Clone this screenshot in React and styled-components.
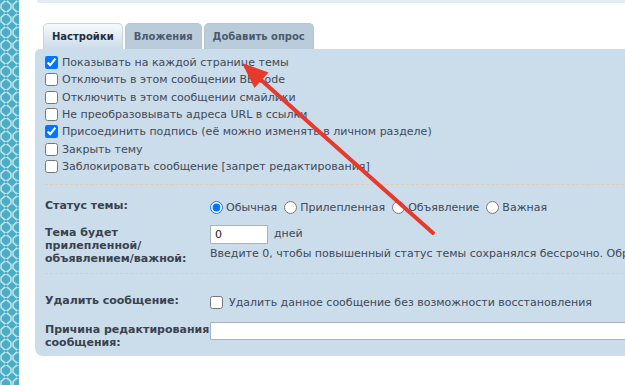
import React from "react";
import styled, { createGlobalStyle } from "styled-components";

const GlobalStyle = createGlobalStyle`
  html, body {
    margin: 0;
    padding: 0;
    background: #fff;
    overflow: hidden;
  }
  body {
    font-family: "DejaVu Sans", Verdana, sans-serif;
    font-size: 11px;
    color: #404a58;
  }
`;

const options = [
  { text: "Показывать на каждой странице темы", checked: true },
  { text: "Отключить в этом сообщении BB-code" },
  { text: "Отключить в этом сообщении смайлики" },
  { text: "Не преобразовывать адреса URL в ссылки" },
  { text: "Присоединить подпись (её можно изменять в личном разделе)", checked: true },
  { text: "Закрыть тему" },
  { text: "Заблокировать сообщение [запрет редактирования]" },
];

const statuses = ["Обычная", "Прилепленная", "Объявление", "Важная"];

const App = () => {
  return (
    <>
      <GlobalStyle />
      <Page>
        <Strip />
        <Main>
          <TopStub />
          <Tabs>
            <Tab active>Настройки</Tab>
            <Tab>Вложения</Tab>
            <Tab>Добавить опрос</Tab>
          </Tabs>
          <Panel>
            <CheckList>
              {options.map((o) => (
                <CheckRow key={o.text}>
                  <Check type="checkbox" defaultChecked={o.checked} />
                  <span>{o.text}</span>
                </CheckRow>
              ))}
            </CheckList>
            <Separator />
            <FormRow>
              <Label>Статус темы:</Label>
              <Controls>
                {statuses.map((s, i) => (
                  <RadioItem key={s}>
                    <Radio type="radio" name="status" defaultChecked={i === 0} />
                    {s}
                  </RadioItem>
                ))}
              </Controls>
            </FormRow>
            <FormRow gap={8}>
              <Label>
                Тема будет
                <br />
                прилепленной/
                <br />
                объявлением/важной:
              </Label>
              <Stack>
                <Controls>
                  <DaysInput defaultValue="0" />
                  <Unit>дней</Unit>
                </Controls>
                <Hint>
                  Введите 0, чтобы повышенный статус темы сохранялся бессрочно. Обратите внимание, что срок отсчитывается с момента публикации
                </Hint>
              </Stack>
            </FormRow>
            <Separator bottom={19} />
            <FormRow>
              <Label>Удалить сообщение:</Label>
              <Controls>
                <Check type="checkbox" />
                <DeleteText>Удалить данное сообщение без возможности восстановления</DeleteText>
              </Controls>
            </FormRow>
            <FormRow gap={10}>
              <Label>
                Причина редактирования
                <br />
                сообщения:
              </Label>
              <ReasonInput />
            </FormRow>
          </Panel>
        </Main>
        <Arrow width="625" height="385" viewBox="0 0 625 385">
          <line x1="433" y1="233" x2="260" y2="79" stroke="#e53a2c" strokeWidth="4" strokeLinecap="round" />
          <polygon points="242,63 268.5,72.5 254.5,88" fill="#e53a2c" />
        </Arrow>
      </Page>
    </>
  );
};

export default App;

const Page = styled.div`
  position: relative;
  display: flex;
  width: 625px;
  height: 385px;
  overflow: hidden;
`;

const Strip = styled.div`
  flex: 0 0 19px;
  background-color: #4aadc5;
  background-image:
    radial-gradient(circle, transparent 4px, rgba(255, 255, 255, 0.5) 4.5px, rgba(255, 255, 255, 0.5) 5.5px, transparent 6px),
    radial-gradient(circle, transparent 3.5px, rgba(255, 255, 255, 0.3) 4px, rgba(255, 255, 255, 0.3) 5px, transparent 5.5px);
  background-size: 12px 13px, 12px 13px;
  background-position: 0 0, 6px 6.5px;
`;

const Main = styled.div`
  flex: 1;
  min-width: 0;
  padding-left: 16px;
  display: flex;
  flex-direction: column;
`;

const TopStub = styled.div`
  height: 3px;
  margin-left: 2px;
  width: 700px;
  background: #e3ebf3;
  border-bottom-left-radius: 4px;
`;

const Tabs = styled.div`
  display: flex;
  gap: 2px;
  margin: 20px 0 0 8px;
  height: 26px;
`;

const Tab = styled.div`
  display: flex;
  align-items: center;
  padding: 0 8px;
  font-weight: bold;
  font-size: 10px;
  border-radius: 5px 5px 0 0;
  border: 1px solid ${(p) => (p.active ? "#c5d5e3" : "#b4c5d4")};
  border-bottom: none;
  color: ${(p) => (p.active ? "#252e3a" : "#4b5a70")};
  background: ${(p) => (p.active ? "linear-gradient(#f7fafc, #cbdcea)" : "#bacbd9")};
`;

const Panel = styled.div`
  width: 760px;
  background: #cbdcea;
  border-radius: 5px 0 0 8px;
  padding: 5px 10px 7px;
  box-sizing: border-box;
`;

const CheckList = styled.div`
  display: flex;
  flex-direction: column;
`;

const CheckRow = styled.label`
  display: flex;
  align-items: center;
  height: 17.33px;
  white-space: nowrap;
`;

const Check = styled.input`
  width: 13px;
  height: 13px;
  margin: 0 4px 0 0;
  flex: none;
`;

const Separator = styled.div`
  border-top: 1px dashed #e0cdb8;
  margin: 8.5px 0 ${(p) => p.bottom ?? 13}px;
`;

const FormRow = styled.div`
  display: grid;
  grid-template-columns: 165px 1fr;
  align-items: start;
  margin-top: ${(p) => p.gap ?? 0}px;
`;

const Label = styled.div`
  font-weight: bold;
  color: #39434f;
  line-height: 13px;
  padding-top: 1px;
  white-space: nowrap;
`;

const Controls = styled.div`
  display: flex;
  align-items: center;
  height: 19px;
  white-space: nowrap;
`;

const RadioItem = styled.label`
  display: flex;
  align-items: center;
  margin-right: 7px;
`;

const Radio = styled.input`
  width: 13px;
  height: 13px;
  margin: 0 3px 0 0;
`;

const Stack = styled.div`
  display: flex;
  flex-direction: column;
`;

const DaysInput = styled.input`
  width: 58px;
  height: 19px;
  box-sizing: border-box;
  border: 1px solid #a9b3bd;
  padding: 0 4px;
  font: inherit;
  color: #222;
  background: #fff;
`;

const Unit = styled.span`
  margin-left: 6px;
  position: relative;
  top: -1px;
`;

const Hint = styled.div`
  margin-top: 3px;
  line-height: 13px;
  white-space: nowrap;
`;

const DeleteText = styled.span`
  margin-left: 2px;
`;

const ReasonInput = styled.input`
  width: 520px;
  height: 18px;
  box-sizing: border-box;
  border: 1px solid #a9b3bd;
  background: #fff;
`;

const Arrow = styled.svg`
  position: absolute;
  left: 0;
  top: 0;
  pointer-events: none;
`;
